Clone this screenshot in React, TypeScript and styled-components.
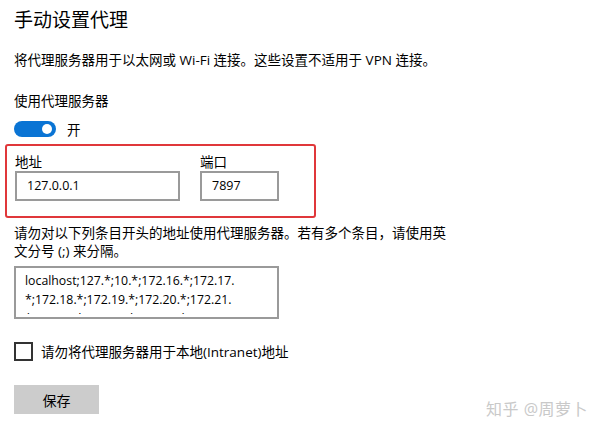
import styled, { createGlobalStyle } from "styled-components";

const GlobalStyle = createGlobalStyle`
  html, body {
    margin: 0;
    padding: 0;
    background: #fff;
  }
  body {
    font-family: "Open Sans", "Noto Sans CJK SC", sans-serif;
    color: #000;
  }
`;

const StyledPage = styled.div`
  position: relative;
  width: 600px;
  height: 433px;
  overflow: hidden;
  box-sizing: border-box;
  padding: 7px 14px 0;
  display: flex;
  flex-direction: column;
  align-items: flex-start;
`;

const StyledTitle = styled.h1`
  margin: 0;
  font-size: 19px;
  line-height: 26px;
  font-weight: 400;
`;

const StyledText = styled.p<{ $top: number }>`
  margin: ${(p) => p.$top}px 0 0;
  font-size: 13.5px;
  line-height: 18px;
  max-width: 436px;
`;

const StyledToggleRow = styled.div`
  display: flex;
  align-items: center;
  gap: 11px;
  height: 17px;
  margin-top: 10px;
  font-size: 13.5px;
`;

const StyledToggle = styled.div<{ $on: boolean }>`
  width: 42px;
  height: 16px;
  border-radius: 8px;
  background: ${(p) => (p.$on ? "#0a74d4" : "#fff")};
  display: flex;
  align-items: center;
  justify-content: ${(p) => (p.$on ? "flex-end" : "flex-start")};
  padding: 0 4px;
  box-sizing: border-box;

  &::after {
    content: "";
    width: 10px;
    height: 10px;
    border-radius: 50%;
    background: #fff;
  }
`;

const StyledHighlight = styled.div`
  margin: 7px 0 0 -9px;
  width: 311px;
  box-sizing: border-box;
  border: 2px solid #e0373a;
  border-radius: 3px;
  padding: 7px 8px 15px;
  display: flex;
  gap: 20px;
`;

const StyledField = styled.div`
  display: flex;
  flex-direction: column;
  font-size: 13.5px;
  line-height: 18px;
`;

const StyledInput = styled.div<{ $width: number }>`
  width: ${(p) => p.$width}px;
  height: 30px;
  box-sizing: border-box;
  border: 2px solid #9a9a9a;
  padding: 0 10px;
  display: flex;
  align-items: center;
  font-size: 12.5px;
`;

const StyledTextArea = styled.div`
  margin-top: 6px;
  width: 265px;
  height: 53px;
  box-sizing: border-box;
  border: 2px solid #9a9a9a;
  padding: 3px 9px 0;
`;

const StyledTextScroll = styled.div`
  height: 43px;
  overflow: hidden;
  font-size: 12.3px;
  line-height: 19px;
  white-space: nowrap;
`;

const StyledCheckRow = styled.label`
  display: flex;
  align-items: center;
  gap: 8px;
  margin-top: 22px;
  font-size: 13.5px;
`;

const StyledCheckbox = styled.span`
  width: 19px;
  height: 19px;
  box-sizing: border-box;
  border: 2px solid #333;
`;

const StyledButton = styled.button`
  margin-top: 24px;
  width: 85px;
  height: 29px;
  border: none;
  background: #cccccc;
  font-family: inherit;
  font-size: 14px;
  color: #000;
  padding: 0;
`;

const StyledWatermark = styled.div`
  position: absolute;
  right: 12px;
  bottom: 13px;
  font-size: 16px;
  color: #c9c9c9;
  text-shadow: 0 0 1px #fff;
  letter-spacing: 0.5px;
`;

const bypassLines = [
  "localhost;127.*;10.*;172.16.*;172.17.",
  "*;172.18.*;172.19.*;172.20.*;172.21.",
  "*;172.22.*;172.23.*;172.24.*;172.25.",
];

const App = () => {
  return (
    <StyledPage>
      <GlobalStyle />
      <StyledTitle>手动设置代理</StyledTitle>
      <StyledText $top={18}>
        将代理服务器用于以太网或 Wi-Fi 连接。这些设置不适用于 VPN 连接。
      </StyledText>
      <StyledText $top={23}>使用代理服务器</StyledText>
      <StyledToggleRow>
        <StyledToggle $on />
        <span>开</span>
      </StyledToggleRow>
      <StyledHighlight>
        <StyledField>
          地址
          <StyledInput $width={165}>127.0.0.1</StyledInput>
        </StyledField>
        <StyledField>
          端口
          <StyledInput $width={79}>7897</StyledInput>
        </StyledField>
      </StyledHighlight>
      <StyledText $top={6}>
        请勿对以下列条目开头的地址使用代理服务器。若有多个条目，请使用英文分号 (;) 来分隔。
      </StyledText>
      <StyledTextArea>
        <StyledTextScroll>
          {bypassLines.map((line, index) => (
            <div key={index}>{line}</div>
          ))}
        </StyledTextScroll>
      </StyledTextArea>
      <StyledCheckRow>
        <StyledCheckbox />
        请勿将代理服务器用于本地(Intranet)地址
      </StyledCheckRow>
      <StyledButton>保存</StyledButton>
      <StyledWatermark>知乎 @周萝卜</StyledWatermark>
    </StyledPage>
  );
};

export default App;
